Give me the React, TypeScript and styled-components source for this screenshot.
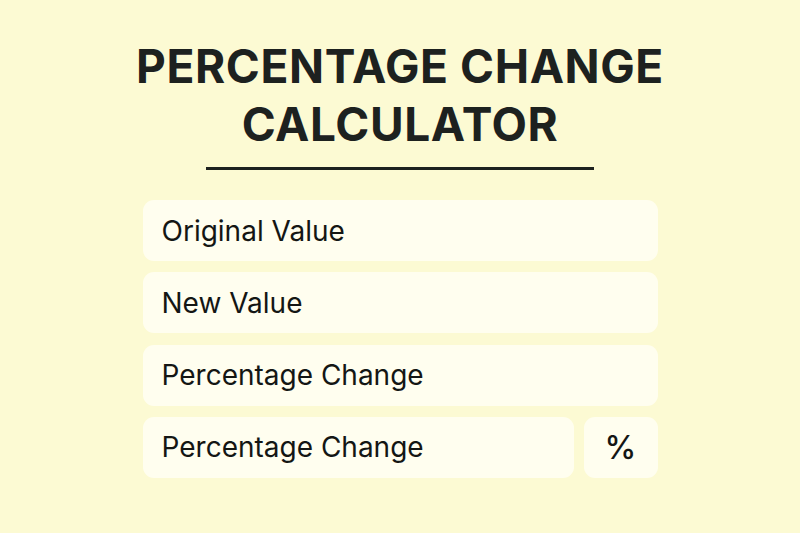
import React from "react";
import styled, { createGlobalStyle } from "styled-components";

const Global = createGlobalStyle`
  html, body { margin: 0; padding: 0; }
  body {
    background: #fcfad3;
    font-family: Inter, "Noto Sans", sans-serif;
  }
`;

const Page = styled.main`
  width: 800px;
  height: 533px;
  box-sizing: border-box;
  padding-top: 37px;
  display: flex;
  flex-direction: column;
  align-items: center;
  background: #fcfad3;
`;

const Title = styled.h1`
  margin: 0;
  font-size: 46px;
  line-height: 58px;
  font-weight: 700;
  color: #1d211f;
  text-align: center;
  letter-spacing: 0.6px;
`;

const Rule = styled.hr`
  width: 388px;
  height: 3px;
  border: 0;
  margin: 14px 0 30px 0;
  background: #1d211f;
`;

const Form = styled.div`
  width: 515px;
  display: flex;
  flex-direction: column;
  gap: 11.3px;
`;

const Row = styled.div`
  display: flex;
  gap: 10px;
`;

const Field = styled.div<{ $center?: boolean; $w?: number }>`
  flex: ${(p) => (p.$w ? `0 0 ${p.$w}px` : "1 1 auto")};
  height: 61px;
  box-sizing: border-box;
  border-radius: 11px;
  background: #fffeef;
  display: flex;
  align-items: center;
  justify-content: ${(p) => (p.$center ? "center" : "flex-start")};
  padding: ${(p) => (p.$center ? "0" : "0 0 0 19px")};
  font-size: 28px;
  font-weight: 400;
  color: #141614;
`;

const Unit = styled.span`
  font-size: 32px;
  font-weight: 500;
`;

export default function App() {
  return (
    <>
      <Global />
      <Page>
        <Title>
          PERCENTAGE CHANGE
          <br />
          CALCULATOR
        </Title>
        <Rule />
        <Form>
          <Row>
            <Field>Original Value</Field>
          </Row>
          <Row>
            <Field>New Value</Field>
          </Row>
          <Row>
            <Field>Percentage Change</Field>
          </Row>
          <Row>
            <Field>Percentage Change</Field>
            <Field $center $w={74}>
              <Unit>%</Unit>
            </Field>
          </Row>
        </Form>
      </Page>
    </>
  );
}
